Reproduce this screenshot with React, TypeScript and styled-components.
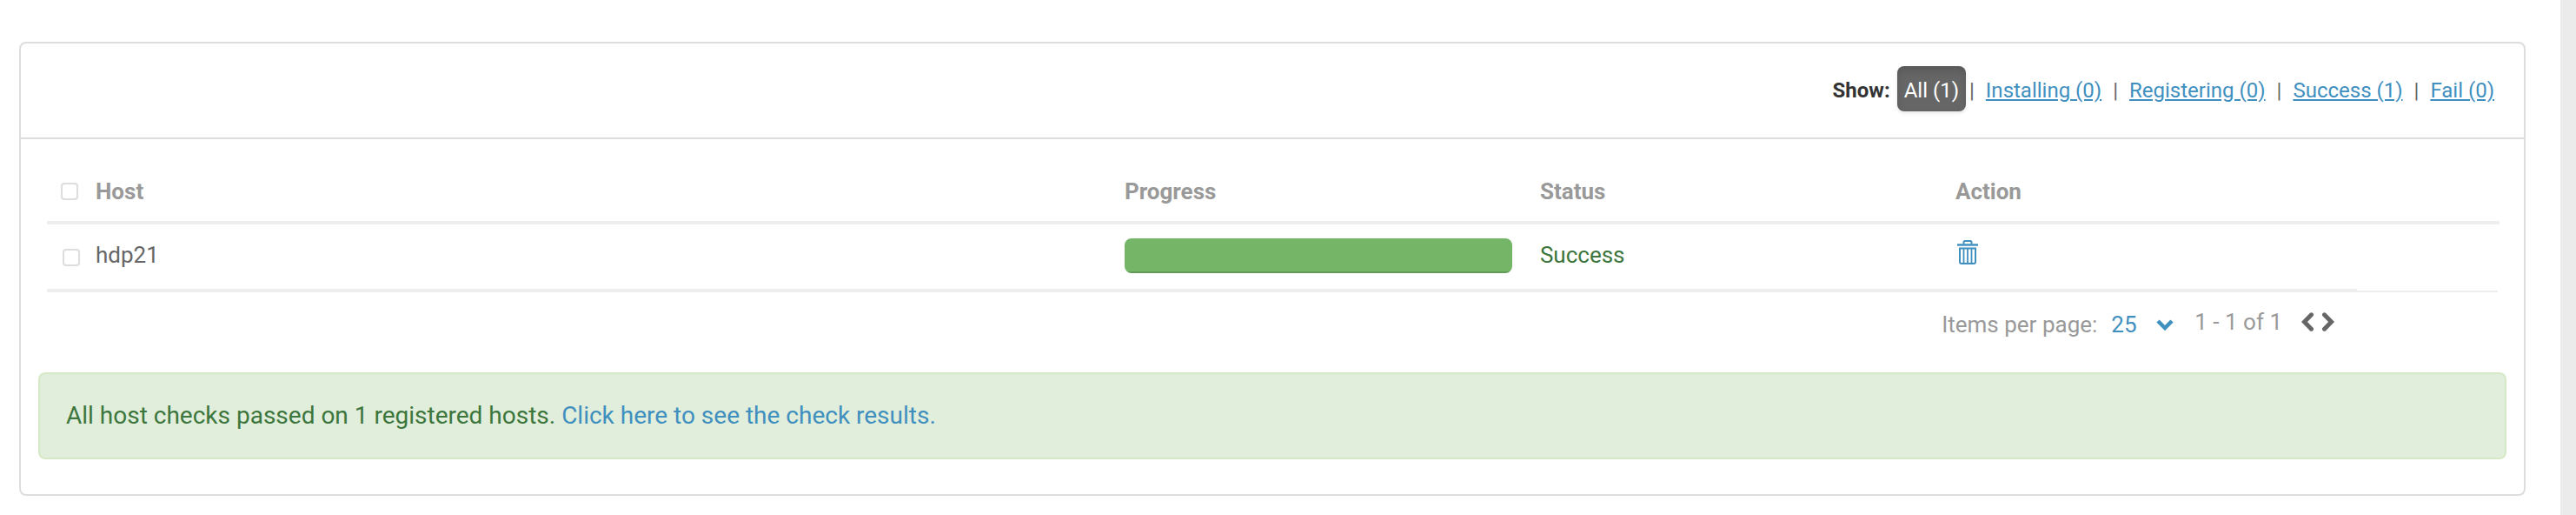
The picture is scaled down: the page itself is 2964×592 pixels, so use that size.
import React, { useState } from 'react';
import styled, { createGlobalStyle, css } from 'styled-components';

const GlobalStyle = createGlobalStyle`
  * { box-sizing: border-box; }
  body {
    margin: 0;
    background: #fff;
    color: #666;
    font-family: Roboto, "Liberation Sans", sans-serif;
    font-size: 26px;
    line-height: 40px;
  }
`;

const Page = styled.div`
  display: flex;
  min-height: 100vh;
`;

const Content = styled.main`
  flex: 1;
  min-width: 0;
  padding: 48px 40px 22px 22px;
`;

const PageEdge = styled.div`
  width: 18px;
  background: #ebebeb;
`;

const Panel = styled.section`
  border: 2px solid #ddd;
  border-radius: 8px;
  background: #fff;
`;

const FilterBar = styled.nav`
  display: flex;
  align-items: baseline;
  justify-content: flex-end;
  height: 110px;
  padding: 26px 34px 0;
  border-bottom: 2px solid #ddd;
  font-size: 24px;
`;

const FilterLabel = styled.strong`
  margin-right: 8px;
  color: #333;
  font-weight: 700;
`;

const FilterLink = styled.a<{ $active: boolean }>`
  color: #3f8fbf;
  text-decoration: underline;
  ${({ $active }) =>
    $active &&
    css`
      padding: 8px 8px 4px;
      border-radius: 8px;
      background: #666;
      color: #fff;
      text-decoration: none;
      box-shadow: inset 0 6px 8px rgba(0, 0, 0, 0.12), 0 2px 4px rgba(0, 0, 0, 0.1);
    `}
`;

const Separator = styled.span<{ $tight: boolean }>`
  margin: 0 13px;
  ${({ $tight }) => $tight && css`margin-left: 4px;`}
`;

const TableArea = styled.div`
  padding: 28px 28px 0 30px;
`;

const HostTable = styled.table`
  width: 100%;
  border-collapse: separate;
  border-spacing: 0;
  table-layout: fixed;
`;

const Col = styled.col<{ $width?: string }>`
  width: ${({ $width }) => $width ?? 'auto'};
`;

const HeadCell = styled.th`
  height: 70px;
  padding: 0 16px 2px;
  border-bottom: 4px solid #eee;
  color: #999;
  font-weight: 700;
  text-align: left;
`;

const Cell = styled.td<{ $success?: boolean }>`
  height: 76px;
  padding: 0 16px 4px;
  border-bottom: 2px solid #eee;
  color: ${({ $success }) => ($success ? '#3c763d' : '#666')};
`;

const FillerCell = styled.td`
  padding: 0;
`;

const Checkbox = styled.input<{ $row?: boolean }>`
  display: block;
  appearance: none;
  width: 20px;
  height: 20px;
  margin: ${({ $row }) => ($row ? '6px 0 0 2px' : '0')};
  border: 2px solid #ddd;
  border-radius: 4px;
  background: #fff;
  &:checked { background: #3f8fbf; }
`;

const ProgressTrack = styled.div`
  height: 40px;
  margin-top: 2px;
  border-radius: 8px;
  overflow: hidden;
  background: #f5f5f5;
`;

const ProgressFill = styled.div`
  height: 100%;
  background: #74b567;
  box-shadow: inset 0 -2px 0 rgba(0, 0, 0, 0.15);
`;

const IconButton = styled.button`
  display: block;
  padding: 0;
  border: 0;
  background: none;
  color: inherit;
  cursor: pointer;
  svg { display: block; }
`;

const DeleteButton = styled(IconButton)`
  margin: 0 0 6px 2px;
  color: #3f8fbf;
`;

const Pagination = styled.div`
  display: flex;
  align-items: center;
  justify-content: flex-end;
  height: 70px;
  margin-right: 2px;
  padding-right: 188px;
  border-top: 2px solid #eee;
  color: #999;
`;

const PageSize = styled.label`
  display: flex;
  align-items: center;
  margin-top: 6px;
  svg { margin-left: 22px; color: #3f8fbf; pointer-events: none; }
`;

const PageSizeSelect = styled.select`
  appearance: none;
  margin: 0 0 0 16px;
  padding: 0;
  border: 0;
  background: none;
  color: #3f8fbf;
  font: inherit;
`;

const Range = styled.span`
  margin: 0 22px 0 24px;
`;

const Pager = styled.div`
  display: flex;
  gap: 10px;
  color: #666;
`;

const Notice = styled.p`
  margin: 24px 20px 40px;
  padding: 28px 30px;
  border: 2px solid #d6e9c6;
  border-radius: 8px;
  background: #e1eedb;
  color: #3c763d;
  font-size: 28px;
`;

const NoticeLink = styled.a`
  color: #3f8fbf;
  text-decoration: none;
`;

const TrashIcon = () => (
  <svg width="24" height="28" viewBox="0 0 24 28" fill="none" stroke="currentColor" aria-hidden="true">
    <path d="M7.5 4.5V2.5Q7.5 1 9 1H15Q16.5 1 16.5 2.5V4.5" strokeWidth="2" />
    <path d="M0 5.5H24" strokeWidth="2.4" />
    <path d="M3 9.5H21V25Q21 27 19 27H5Q3 27 3 25Z" strokeWidth="2" />
    <path d="M7.5 10V26M12 10V26M16.5 10V26" strokeWidth="1.8" />
  </svg>
);

const ChevronDown = () => (
  <svg width="20" height="14" viewBox="0 0 20 14" fill="none" stroke="currentColor" strokeWidth="4.5" aria-hidden="true">
    <path d="M2 3L10 11L18 3" />
  </svg>
);

const Arrow = ({ back }: { back?: boolean }) => (
  <svg width="14" height="22" viewBox="0 0 14 22" fill="none" stroke="currentColor" strokeWidth="5" strokeLinecap="round" strokeLinejoin="miter" aria-hidden="true">
    <path d={back ? 'M11.5 2.8L3.5 11L11.5 19.2' : 'M2.5 2.8L10.5 11L2.5 19.2'} />
  </svg>
);

const filters = ['All (1)', 'Installing (0)', 'Registering (0)', 'Success (1)', 'Fail (0)'];
const hosts = [{ name: 'hdp21', progress: 100, status: 'Success' }];

export default function App() {
  const [active, setActive] = useState(0);
  return (
    <>
      <GlobalStyle />
      <Page>
        <Content>
          <Panel>
            <FilterBar>
              <FilterLabel>Show:</FilterLabel>
              {filters.map((label, i) => (
                <React.Fragment key={label}>
                  {i > 0 && <Separator $tight={i - 1 === active}>|</Separator>}
                  <FilterLink href="#" $active={i === active} onClick={() => setActive(i)}>
                    {label}
                  </FilterLink>
                </React.Fragment>
              ))}
            </FilterBar>
            <TableArea>
              <HostTable>
                <colgroup>
                  <Col $width="40px" />
                  <Col />
                  <Col $width="16.94%" />
                  <Col $width="16.94%" />
                  <Col $width="16.94%" />
                  <Col $width="164px" />
                </colgroup>
                <thead>
                  <tr>
                    <HeadCell>
                      <Checkbox type="checkbox" aria-label="Select all hosts" />
                    </HeadCell>
                    <HeadCell>Host</HeadCell>
                    <HeadCell>Progress</HeadCell>
                    <HeadCell>Status</HeadCell>
                    <HeadCell colSpan={2}>Action</HeadCell>
                  </tr>
                </thead>
                <tbody>
                  {hosts.map((host) => (
                    <tr key={host.name}>
                      <Cell>
                        <Checkbox $row type="checkbox" aria-label={`Select ${host.name}`} />
                      </Cell>
                      <Cell>{host.name}</Cell>
                      <Cell>
                        <ProgressTrack role="progressbar" aria-label="Progress" aria-valuenow={host.progress}>
                          <ProgressFill style={{ width: `${host.progress}%` }} />
                        </ProgressTrack>
                      </Cell>
                      <Cell $success>{host.status}</Cell>
                      <Cell>
                        <DeleteButton type="button" aria-label={`Remove ${host.name}`}>
                          <TrashIcon />
                        </DeleteButton>
                      </Cell>
                      <FillerCell />
                    </tr>
                  ))}
                </tbody>
              </HostTable>
              <Pagination>
                <PageSize>
                  Items per page:
                  <PageSizeSelect defaultValue="25">
                    <option>25</option>
                  </PageSizeSelect>
                  <ChevronDown />
                </PageSize>
                <Range>1 - 1 of 1</Range>
                <Pager>
                  <IconButton type="button" aria-label="Previous page"><Arrow back /></IconButton>
                  <IconButton type="button" aria-label="Next page"><Arrow /></IconButton>
                </Pager>
              </Pagination>
            </TableArea>
            <Notice>
              All host checks passed on 1 registered hosts.{' '}
              <NoticeLink href="#">Click here to see the check results.</NoticeLink>
            </Notice>
          </Panel>
        </Content>
        <PageEdge />
      </Page>
    </>
  );
}
